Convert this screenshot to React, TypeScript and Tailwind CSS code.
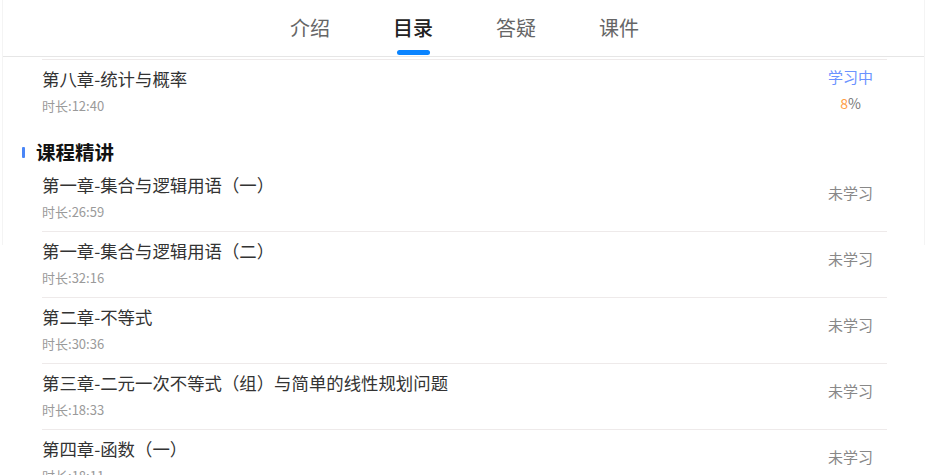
import React from 'react';

const tabs = ['介绍', '目录', '答疑', '课件'];

const lessons = [
  { title: '第一章-集合与逻辑用语（一）', time: '26:59' },
  { title: '第一章-集合与逻辑用语（二）', time: '32:16' },
  { title: '第二章-不等式', time: '30:36' },
  { title: '第三章-二元一次不等式（组）与简单的线性规划问题', time: '18:33' },
  { title: '第四章-函数（一）', time: '18:11' },
];

const Row = (props: { title: string; time: string; border?: boolean; learning?: boolean; key?: any }) => (
  <div className={props.border ? 'flex justify-between border-t border-[#eeeaea] pr-[14px]' : 'flex justify-between pr-[14px]'}>
    <div className="flex flex-col pt-[8px] pb-[10px]">
      <div className="text-[17.4px] leading-[22px] text-[#333]">{props.title}</div>
      <div className="mt-[7px] text-[13px] leading-[18px] text-[#9a9a9a]">时长:{props.time}</div>
    </div>
    {props.learning ? (
      <div className="flex flex-col items-center pt-[7px] text-[15px] leading-[20px]">
        <span className="text-[#6b93ff]">学习中</span>
        <span className="mt-[6px] text-[14px] text-[#777]">
          <span className="text-[#ff9d47]">8</span>%
        </span>
      </div>
    ) : (
      <div className="pt-[17px] text-[15px] leading-[20px] text-[#888]">未学习</div>
    )}
  </div>
);

export default function App() {
  return (
    <div className="h-[475px] w-[927px] overflow-hidden bg-white font-['Noto_Sans_CJK_SC','Noto_Sans',sans-serif]">
      <div className="mx-[2px] h-[245px] border-x border-[#f4f4f4]">
        <div className="flex h-[57px] justify-center gap-[63px] border-b border-[#e6e6e6] pl-[2px]">
          {tabs.map((t, i) => (
            <div key={t} className="flex flex-col items-center">
              <span
                className={
                  i === 1
                    ? 'pt-[14px] text-[20px] leading-[28px] font-medium text-[#222]'
                    : 'pt-[14px] text-[20px] leading-[28px] text-[#666]'
                }
              >
                {t}
              </span>
              {i === 1 && <span className="mt-[8px] h-[5px] w-[33px] rounded-full bg-[#0a84ff]" />}
            </div>
          ))}
        </div>
        <div className="pt-[2px]">
          <div className="ml-[39px] mr-[37px] border-t border-[#eeeaea]">
            <Row title="第八章-统计与概率" time="12:40" learning />
          </div>
          <div className="flex items-center gap-[11px] pl-[19px] pt-[14px] pb-[1px]">
            <span className="h-[11px] w-[3px] rounded-[1px] bg-[#4a86f7]" />
            <span className="text-[19.5px] leading-[26px] font-bold text-[#111]">课程精讲</span>
          </div>
          <div className="ml-[39px] mr-[37px]">
            {lessons.map((l, i) => (
              <Row key={l.title} title={l.title} time={l.time} border={i > 0} />
            ))}
          </div>
        </div>
      </div>
    </div>
  );
}
